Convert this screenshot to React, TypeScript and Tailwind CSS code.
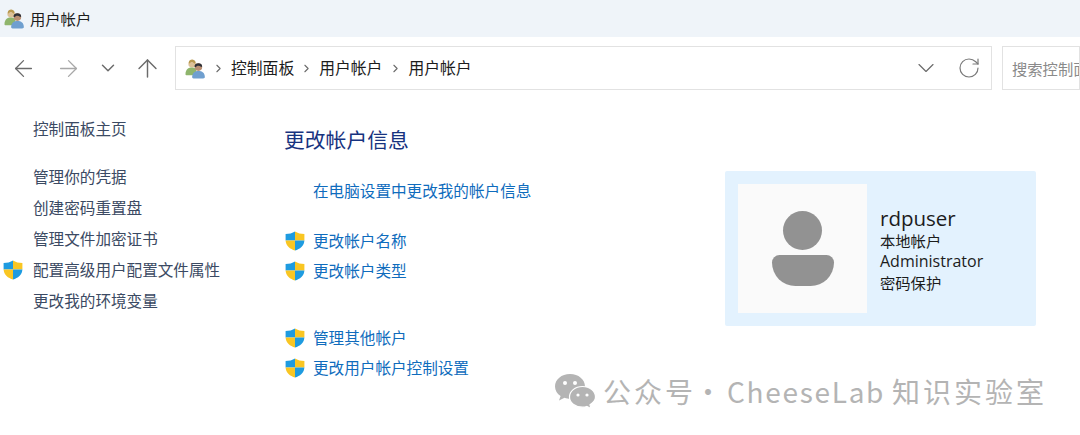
import { ChevronDown, ChevronRight, ArrowLeft, ArrowRight, ArrowUp, RotateCw } from 'lucide-react';

const CJK = "font-['Noto_Sans_CJK_SC','Noto_Sans',sans-serif]";

function UsersIcon({ className }: { className?: string }) {
  return (
    <svg viewBox="0 0 22 22" className={className}>
      <circle cx="7.5" cy="6" r="4" fill="#dcc097" />
      <path d="M4 4.5 C4.5 1 10 0.5 11 4.5 L10 6 C8 3.5 6 4 4.6 6 Z" fill="#b8994f" />
      <path d="M0.5 17 C0.5 12 3.5 10 7.5 10 C10.5 10 12 11.5 12 14 L10 18 L2 18 C1 18 0.5 17.8 0.5 17 Z" fill="#8fb56c" />
      <circle cx="14" cy="9.5" r="4" fill="#b98e72" />
      <path d="M10 9 C9.5 5 18 4 18 9 L17 9.5 C15 7.5 12.5 7.5 11 9.8 Z" fill="#2f3138" />
      <path d="M7.5 20 C7.5 15.5 10.5 13.5 14 13.5 C18 13.5 20.8 15.5 20.8 20 C20.8 21 20 21.5 19 21.5 L9 21.5 C8 21.5 7.5 21 7.5 20 Z" fill="#6f9fcf" />
    </svg>
  );
}

function ShieldIcon() {
  return (
    <svg viewBox="0 0 20 20" className="h-5 w-5 shrink-0">
      <path d="M10 .5 C7.5 2.2 4 3 .6 3 L.6 9.5 L10 9.5 Z" fill="#1e9be0" />
      <path d="M10 .5 C12.5 2.2 16 3 19.4 3 L19.4 9.5 L10 9.5 Z" fill="#f9c623" />
      <path d="M.6 9.5 L10 9.5 L10 19.6 C5 18 1 15 .6 9.5 Z" fill="#f9c623" />
      <path d="M19.4 9.5 L10 9.5 L10 19.6 C15 18 19 15 19.4 9.5 Z" fill="#1e9be0" />
    </svg>
  );
}

function WeChatIcon() {
  return (
    <svg viewBox="0 0 42 36" className="h-[36px] w-[42px] shrink-0">
      <path d="M16 1 C7.5 1 1 6.5 1 13.5 C1 17.5 3.2 20.8 6.6 23 L5 27.5 L10.5 24.8 C12.5 25.5 14.5 25.8 16 25.8 C24.5 25.8 31 20.5 31 13.5 C31 6.5 24.5 1 16 1 Z" fill="#b4b4b4" />
      <path d="M28.5 13.5 C21 13.5 15.5 18.3 15.5 24 C15.5 29.7 21 34.2 28.5 34.2 C30 34.2 31.5 34 32.8 33.5 L37 35.5 L36 31.8 C39.2 29.7 41.5 27 41.5 24 C41.5 18.3 36 13.5 28.5 13.5 Z" fill="#b4b4b4" stroke="#ffffff" strokeWidth="1.2" />
      <circle cx="11" cy="10" r="2" fill="#ffffff" />
      <circle cx="21" cy="10" r="2" fill="#ffffff" />
      <circle cx="24" cy="22" r="1.6" fill="#ffffff" />
      <circle cx="33" cy="22" r="1.6" fill="#ffffff" />
    </svg>
  );
}

const leftLinks = ['管理你的凭据', '创建密码重置盘', '管理文件加密证书', '配置高级用户配置文件属性', '更改我的环境变量'];

export default function App() {
  return (
    <div className={`relative h-[435px] w-[1080px] overflow-hidden bg-white ${CJK}`}>
      {/* Title bar */}
      <div className="flex h-[37px] items-center gap-[5px] bg-[#eff4f9] pl-1">
        <UsersIcon className="h-[21px] w-[21px]" />
        <span className="text-[15.3px] text-[#1c1c1c]">用户帐户</span>
      </div>

      {/* Nav row */}
      <div className="mt-[9px] flex h-[44px] items-center">
        <div className="flex w-[175px] items-center text-[#6b6b6b]">
          <ArrowLeft className="ml-[10px] h-[27px] w-[27px]" strokeWidth={1.2} />
          <ArrowRight className="ml-[18px] h-[27px] w-[27px] text-[#a8a8a8]" strokeWidth={1.2} />
          <ChevronDown className="ml-[15px] h-[22px] w-[22px]" strokeWidth={1.6} />
          <ArrowUp className="ml-[14px] h-[29px] w-[29px]" strokeWidth={1.2} />
        </div>
        <div className="flex h-[44px] w-[817px] items-center border border-[#e2e2e2] pl-[9px]">
          <UsersIcon className="h-[21px] w-[21px]" />
          <ChevronRight className="mx-[6px] h-[13px] w-[13px] text-[#6b6b6b]" strokeWidth={2} />
          <span className="text-[15.8px] text-[#1c1c1c]">控制面板</span>
          <ChevronRight className="mx-[6px] h-[13px] w-[13px] text-[#6b6b6b]" strokeWidth={2} />
          <span className="text-[15.8px] text-[#1c1c1c]">用户帐户</span>
          <ChevronRight className="mx-[6.5px] h-[13px] w-[13px] text-[#6b6b6b]" strokeWidth={2} />
          <span className="text-[15.8px] text-[#1c1c1c]">用户帐户</span>
          <ChevronDown className="ml-auto h-[28px] w-[28px] text-[#6b6b6b]" strokeWidth={1} />
          <RotateCw className="ml-[17px] mr-[10px] h-[24px] w-[24px] text-[#7a7a7a]" strokeWidth={1.2} />
        </div>
        <div className="ml-[10px] flex h-[44px] flex-1 items-center overflow-hidden whitespace-nowrap border border-[#e2e2e2] pl-[9px] text-[15.3px] text-[#8a8a8a]">
          搜索控制面板
        </div>
      </div>

      {/* Content */}
      <div className="flex">
        {/* Left nav */}
        <div className="w-[285px] shrink-0 pt-[26px]">
          <div className="pl-[33px] text-[15.6px] leading-[24px] text-[#3b4a63]">控制面板主页</div>
          <div className="mt-[25px] flex flex-col gap-[7px]">
            {leftLinks.map((label, i) => (
              <div key={label} className="flex h-[24px] items-center text-[15.6px] text-[#3b4a63]">
                {i === 3 ? (
                  <div className="ml-[3px] mr-[10px]"><ShieldIcon /></div>
                ) : (
                  <div className="w-[33px]" />
                )}
                {label}
              </div>
            ))}
          </div>
        </div>

        {/* Main */}
        <div className="w-[440px] shrink-0 pt-[34px]">
          <h1 className="-ml-[1px] text-[20.8px] leading-[30px] text-[#17337f]">更改帐户信息</h1>
          <div className="mt-[24px] pl-[28px] text-[15.6px] leading-[24px] text-[#0f6cbd]">在电脑设置中更改我的帐户信息</div>
          <div className="mt-[27px] flex flex-col gap-[6px]">
            {['更改帐户名称', '更改帐户类型'].map((label) => (
              <div key={label} className="flex h-[24px] items-center gap-[8px] text-[15.6px] text-[#0f6cbd]">
                <ShieldIcon />
                {label}
              </div>
            ))}
          </div>
          <div className="mt-[43px] flex flex-col gap-[6px]">
            {['管理其他帐户', '更改用户帐户控制设置'].map((label) => (
              <div key={label} className="flex h-[24px] items-center gap-[8px] text-[15.6px] text-[#0f6cbd]">
                <ShieldIcon />
                {label}
              </div>
            ))}
          </div>
        </div>

        {/* Account card */}
        <div className="mt-[81px] flex h-[155px] w-[311px] shrink-0 items-center gap-[13px] rounded-[2px] bg-[#e3f2fe] pl-[13px]">
          <div className="flex h-[129px] w-[129px] shrink-0 flex-col items-center justify-center bg-[#fafafa]">
            <div className="h-[39px] w-[39px] rounded-full bg-[#929292]" />
            <div className="mt-[5px] h-[31px] w-[62px] rounded-t-[10px] rounded-b-[31px] bg-[#929292]" />
          </div>
          <div className="pt-[2px] text-[#1c1c1c]">
            <div className="h-[24px] font-['Open_Sans',sans-serif] text-[20.5px] leading-[24px]">rdpuser</div>
            <div className="h-[21px] text-[15.3px] leading-[21px]">本地帐户</div>
            <div className="h-[21px] font-['Open_Sans',sans-serif] text-[16px] leading-[21px]">Administrator</div>
            <div className="h-[21px] text-[15.3px] leading-[21px]">密码保护</div>
          </div>
        </div>
      </div>

      {/* Watermark */}
      <div className="absolute left-[554px] top-[373px] flex items-center whitespace-nowrap text-[28px] leading-[36px] text-[#b4b4b4]">
        <WeChatIcon />
        <span className="ml-[7px] tracking-[3px]">公众号</span>
        <span className="-ml-[2px] tracking-[2px]">·</span>
        <span className="ml-[3px] tracking-[1.7px]">CheeseLab</span>
        <span className="ml-[7px] tracking-[3px]">知识实验室</span>
      </div>
    </div>
  );
}
